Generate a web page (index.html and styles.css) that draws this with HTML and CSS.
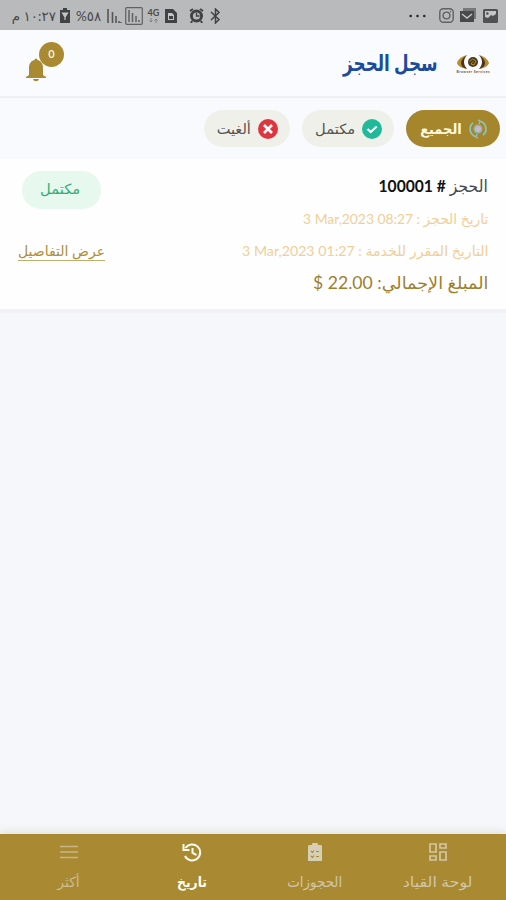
FILE: index.html
```html
<!DOCTYPE html>
<html lang="ar" dir="rtl">
<head>
<meta charset="utf-8">
<meta name="viewport" content="width=device-width">
<title>سجل الحجز</title>
<link rel="stylesheet" href="styles.css">
</head>
<body>
<div class="status" dir="ltr">
  <div class="status-left">
    <span class="clock" dir="rtl">١٠:٢٧ م</span>
    <svg class="battery" width="10" height="15" viewBox="0 0 10 15"><path fill="#414244" d="M3 0h4v2h3v13H0V2h3z"/><path d="M2.500 5L5 9l2.500-4zM5 9v3" stroke="#c4c5c6" stroke-width="1.200" fill="#c4c5c6"/></svg>
    <span class="percent">%٥٨</span>
    <svg class="signal" width="15" height="14" viewBox="0 0 15 14"><path d="M1 0v14M5.500 3v11M9 7v7M12 12v2M14 13v1" stroke="#555658" stroke-width="1.600"/></svg>
    <svg class="signal-box" width="18" height="18" viewBox="0 0 18 18"><rect x=".7" y=".7" width="16.600" height="16.600" rx="1" fill="none" stroke="#606163" stroke-width="1.200"/><path d="M4 3v12M7.500 6v9M11 9v6M14 13v2" stroke="#606163" stroke-width="1.500"/></svg>
    <div class="net"><span>4G</span><svg width="9" height="5" viewBox="0 0 9 5"><path d="M2 0v4M.5 2.500L2 4l1.500-1.500M7 5V1M5.500 2.500L7 1l1.500 1.500" fill="none" stroke="#77787a" stroke-width=".9"/></svg></div>
    <svg class="sim" width="12" height="14" viewBox="0 0 12 14"><path fill="#414244" d="M0 0h8l4 4v10H0z"/><path fill="#c4c5c6" d="M3 4h4l2 2v5H3z"/><path fill="#414244" d="M4 7h4v3H4z"/></svg>
    <svg class="alarm" width="15" height="15" viewBox="0 0 15 15"><circle cx="7.500" cy="8" r="6.500" fill="#414244"/><path d="M1 3l3-2M14 3l-3-2M3 13l-1 2M12 13l1 2" stroke="#414244" stroke-width="2"/><circle cx="7.500" cy="8" r="3.600" fill="#b9babb"/><path d="M7.500 5v3h3" stroke="#414244" fill="none" stroke-width="1.300"/></svg>
    <svg class="bluetooth" width="11" height="16" viewBox="0 0 11 16"><path d="M1 4l8 7.500L5.500 15V1L9 4.500 1 12" stroke="#414244" stroke-width="1.500" fill="none"/></svg>
  </div>
  <div class="status-right">
    <svg class="dots" width="17" height="4" viewBox="0 0 17 4"><g fill="#292a2b"><circle cx="1.700" cy="2" r="1.300"/><circle cx="8.500" cy="2" r="1.300"/><circle cx="15.300" cy="2" r="1.300"/></g></svg>
    <svg width="15" height="15" viewBox="0 0 15 15" fill="none" stroke="#606163" stroke-width="1.400"><rect x=".8" y=".8" width="13.400" height="13.400" rx="3.500"/><circle cx="7.500" cy="7.500" r="3.400"/><path d="M11 3.500h1"/></svg>
    <svg width="17" height="15" viewBox="0 0 17 15"><path fill="#77787a" d="M3 0h13v11H3z"/><path fill="#48494b" d="M0 3h14v11H0z"/><path d="M2 6l5 4 5-4" stroke="#c4c5c6" stroke-width="1.500" fill="none"/></svg>
    <svg width="15" height="14" viewBox="0 0 15 14"><rect width="15" height="14" rx="1.500" fill="#505153"/><path fill="#c4c5c6" d="M2 10V8l3 1 3-3 2 1 3-2V2H2z"/><circle cx="4.300" cy="4.500" r="1.300" fill="#505153"/></svg>
  </div>
</div>

<header class="header">
  <div class="brand">
    <svg class="logo" width="34" height="22" viewBox="0 0 34 22"><path fill="#b68b31" d="M11 1C4 3 2 6 1 9c1 3 4 5 10 6C6 10 6 6 11 1zM23 1c7 2 9 5 10 8-1 3-4 5-10 6 5-5 5-9 0-14z"/><path fill="#4a351a" d="M11 1C7 4 5 6 5 9s2 5 6 6C7 10 7 6 11 1zM23 1c4 3 6 5 6 8s-2 5-6 6c4-5 4-9 0-14z"/><circle cx="17" cy="8" r="5" fill="#4b3b1d"/><path d="M13.500 7.500l3-2.500 3.500 2-2 4-3-1 2-2.500" stroke="#b68b31" fill="none"/><text x="17" y="19" text-anchor="middle" class="logo-text" textLength="33">Browser Services</text></svg>
    <h1><span class="fit">سجل الحجز</span></h1>
  </div>
  <div class="bell">
    <svg width="20" height="24" viewBox="0 0 20 24"><path fill="#a98a32" d="M8.500 2a1.500 1.500 0 0 1 3 0c4 1 5.500 4 5.500 8v7l3 2v1H0v-1l3-2v-7c0-4 1.500-7 5.500-8zM7 21h6c-.5 3-5.500 3-6 0z"/></svg>
    <span class="badge">0</span>
  </div>
</header>

<nav class="filters">
  <div class="chip chip-all"><svg width="20" height="20" viewBox="0 0 20 20"><g fill="none" stroke="#8fc3be" stroke-width="1.700"><path d="M8 17.700A8 8 0 0 1 5 3.800M12 2.300a8 8 0 0 1 3 13.900"/><path d="M9 15l-1 2.700 2 1.500M11 5l1-2.700-2-1.500" stroke-width="1.300"/></g><circle cx="10" cy="10" r="4.500" fill="#8fb7a6"/><circle cx="10" cy="10" r="3" fill="#c9b6cc"/></svg><span class="fit">الجميع</span></div>
  <div class="chip chip-done"><svg width="20" height="20" viewBox="0 0 20 20"><circle cx="10" cy="10" r="10" fill="#20b99a"/><path d="M5.500 10l3.200 3 6-5.500" stroke="#fff" stroke-width="2.200" fill="none"/></svg><span class="fit">مكتمل</span></div>
  <div class="chip chip-cancel"><svg width="20" height="20" viewBox="0 0 20 20"><circle cx="10" cy="10" r="10" fill="#df3540"/><path d="M6 6l8 8M14 6l-8 8" stroke="#fff" stroke-width="2.600"/></svg><span class="fit">ألغيت</span></div>
</nav>

<main class="booking">
  <div class="info">
    <div class="line number"><span class="fit">الحجز <b># 100001</b></span></div>
    <div class="line date first"><span class="fit">تاريخ الحجز : <bdi dir="ltr">3 Mar,2023 08:27</bdi></span></div>
    <div class="line date second"><span class="fit">التاريخ المقرر للخدمة : <bdi dir="ltr">3 Mar,2023 01:27</bdi></span></div>
    <div class="line total"><span class="fit">المبلغ الإجمالي: 22.00 $</span></div>
  </div>
  <div class="side">
    <div class="state"><span class="fit">مكتمل</span></div>
    <a class="details"><span class="fit">عرض التفاصيل</span></a>
  </div>
</main>

<footer class="tabs">
  <div class="tab t1"><svg width="18" height="18" viewBox="0 0 18 18" fill="none" stroke="#d1c6a7" stroke-width="1.700"><path d="M11 1h6v4h-6zM11 9h6v8h-6zM1 1h6v8H1zM1 13h6v4H1z"/></svg><span class="fit">لوحة القياد</span></div>
  <div class="tab t2"><svg width="14" height="19" viewBox="0 0 14 19"><path fill="#d6ceb5" d="M1 2h3a3 3 0 0 1 6 0h3l1 1v15H0V3z"/><path d="M3 8l1.500 1.500L6 7.500M3 13l1.500 1.500L6 12.500M8 8.500h3M8 13.500h3" fill="none" stroke="#a98a32" stroke-width="1.100"/></svg><span class="fit">الحجوزات</span></div>
  <div class="tab t3"><svg width="20" height="19" viewBox="0 0 20 19" fill="none" stroke="#fffdf0" stroke-width="2"><path d="M3.500 5A8 8 0 1 1 3 13M1.500 1v6h6M10.500 5v5l4 2"/></svg><span class="fit">تاريخ</span></div>
  <div class="tab t4"><svg width="18" height="14" viewBox="0 0 18 14" stroke="#c5b885" stroke-width="1.700"><path d="M0 1.500h18M0 7h18M0 12.500h18"/></svg><span class="fit">أكثر</span></div>
</footer>
</body>
</html>
```
FILE: styles.css
```css
* { box-sizing: border-box; }
body {
  margin: 0;
  height: 900px;
  display: flex;
  flex-direction: column;
  overflow: hidden;
  background: #f6f7fb;
  font-family: Lato, "DejaVu Sans", sans-serif;
}
svg { display: block; flex: none; }
.fit { display: inline-block; white-space: nowrap; transform-origin: right center; }
.status {
  height: 30px;
  flex: none;
  background: #b9babb;
  display: flex;
  justify-content: space-between;
  padding: 1px 8px 0 11px;
  color: #48494b;
}
.status-left, .status-right { display: flex; align-items: center; }
.clock { width: 45px; font-size: 13.500px; white-space: nowrap; }
.battery { margin-left: 4px; }
.percent { width: 27px; margin-left: 6px; font-size: 13.500px; white-space: nowrap; }
.signal { margin-left: 4px; }
.signal-box { margin-left: 3px; }
.net { width: 13px; margin-left: 4px; font-size: 9px; font-weight: bold; line-height: 10px; display: flex; flex-direction: column; align-items: center; }
.sim { margin-left: 5px; }
.alarm { margin-left: 12px; }
.bluetooth { margin-left: 6px; }
.status-right { gap: 6px; }
.dots { margin-right: 7px; }

.header {
  height: 68px;
  flex: none;
  display: flex;
  justify-content: space-between;
  padding: 0 16px 0 25px;
  background: #fafbfe;
  border-bottom: 2px solid #eff0f3;
}
.brand { display: flex; align-items: center; }
.logo { margin-top: 3px; }
.logo-text { font: bold 3.500px Lato, sans-serif; fill: #66543b; }
h1 { margin: 0 18px 0 0; width: 95px; font-size: 22px; line-height: 30px; color: #1b4b9b; }
h1 .fit { transform: scaleX(.765); }
.bell { position: relative; width: 40px; padding: 28px 0 0 1px; direction: ltr; }
.badge {
  position: absolute;
  left: 14px;
  top: 12px;
  width: 25px;
  height: 25px;
  border-radius: 50%;
  background: #a98a32;
  color: #f6efd5;
  font-size: 11px;
  font-weight: bold;
  line-height: 24px;
  text-align: center;
}
.filters { height: 61px; flex: none; display: flex; padding: 12px 6px 0; background: #f9fafd; }
.chip { height: 37px; border-radius: 19px; display: flex; align-items: center; padding-right: 12px; font-size: 14px; background: #f0f0eb; color: #55544f; }
.chip .fit { margin-right: 7px; }
.chip-all { width: 94px; background: #a6862d; color: #fff8dc; font-weight: bold; }
.chip-all .fit { margin-right: 6px; transform: scaleX(.93); }
.chip-done { width: 92px; margin-right: 12px; }
.chip-done .fit { transform: scaleX(1.050); }
.chip-cancel { width: 86px; margin-right: 12px; }
.chip-cancel .fit { transform: scaleX(1.040); }

.booking {
  height: 154px;
  flex: none;
  display: flex;
  justify-content: space-between;
  padding: 0 18px;
  background: #fefefe;
  border-bottom: 4px solid #f0f2f5;
}
.info { padding-top: 12px; }
.line { height: 30px; line-height: 30px; }
.number { font-size: 17px; color: #4a4a4c; }
.number .fit { transform: scaleX(.92); }
.number b { color: #111; }
.date { font-size: 14px; color: #f0cf99; }
.first { height: 33px; line-height: 36px; }
.first .fit { transform: scaleX(.989); }
.second { line-height: 34px; }
.second .fit { transform: scaleX(1.012); }
.total { font-size: 17px; line-height: 37px; color: #9d802c; }
.total .fit { transform: scaleX(1.035); }
.side { width: 88px; padding-top: 12px; direction: ltr; }
.state { width: 79px; height: 38px; margin-left: 4px; border-radius: 19px; background: #e7f8ee; color: #31ad75; font-size: 14px; line-height: 36px; text-align: center; }
.state .fit { transform: scaleX(1.050); }
.details { display: block; margin: 31px 0 0; font-size: 14px; line-height: 22px; color: #ad8f3c; text-decoration: none; }
.details .fit { border-bottom: 1px solid #c4ac6c; line-height: 18px; }

.tabs { height: 66px; flex: none; margin-top: auto; padding: 0 7px; display: grid; grid-template-columns: repeat(4, 1fr); background: #a98a32; box-shadow: 0 -2px 8px rgba(180, 175, 145, .3); }
.tab { display: grid; grid-template-rows: 36px 24px; justify-items: center; align-items: center; color: #d1c6a7; font-size: 14px; line-height: 24px; }
.tab .fit { transform-origin: center; }
.t1 .fit { transform: scaleX(1.140); }
.t2 .fit { transform: scaleX(.96); }
.t3 { color: #fffdf0; font-weight: bold; }
.t3 .fit { transform: scaleX(.88); }
.t4 { color: #c9bc90; }
```
